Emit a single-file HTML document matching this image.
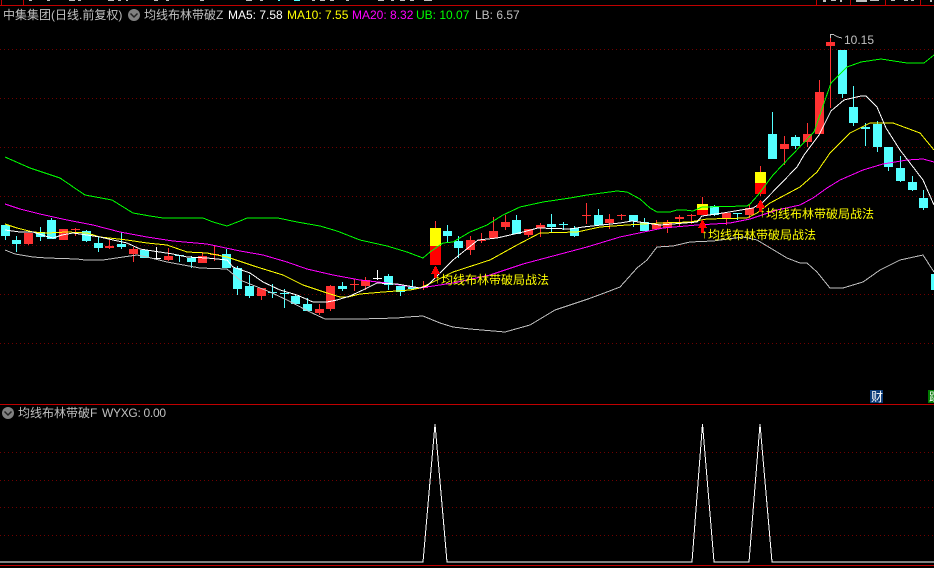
<!DOCTYPE html>
<html lang="zh"><head><meta charset="utf-8"><title>均线布林带破</title>
<style>
html,body{margin:0;padding:0;background:#000;width:934px;height:568px;overflow:hidden}
#w{position:relative;width:934px;height:568px;background:#000;overflow:hidden;font:12px/12px "Liberation Sans","WenQuanYi Zen Hei","Noto Sans CJK SC",sans-serif}
#w svg{position:absolute;left:0;top:0}
#w span{position:absolute;white-space:nowrap;color:#c0c0c0;line-height:12px}
#w span.a{color:#ffff00;font-family:"WenQuanYi Zen Hei","Noto Sans CJK SC",sans-serif;font-size:12px}
#w span.u{color:#ffff00;font-family:"Liberation Mono","DejaVu Sans Mono",monospace;font-size:12px}
</style></head><body><div id="w">
<svg width="934" height="568" viewBox="0 0 934 568" shape-rendering="crispEdges">
<path stroke="#700000" stroke-width="1" stroke-dasharray="1 3" fill="none" d="M0 49.5H934M0 98.5H934M0 147.5H934M0 196.5H934M0 245.5H934M0 294.5H934M0 343.5H934M0 452.5H934M0 480.5H934M0 507.5H934M0 535.5H934"/>
<path fill="#c00000" d="M0 5h934v1H0zM0 404h934v1H0zM0 565h934v1H0zM1 0h1v5H1zM23 0h1v5h-1zM816 0h1v5h-1zM850 0h1v5h-1zM885 0h1v5h-1zM920 0h1v5h-1z"/>
<path fill="#c0c0c0" d="M29 0h3v1h-3zM47 0h3v1h-3zM69 0h6v1h-6zM78 0h3v1h-3zM108 0h6v1h-6zM118 0h3v1h-3zM126 0h2v1h-2zM154 0h4v1h-4zM166 0h3v1h-3zM200 0h4v1h-4zM246 0h6v1h-6zM260 0h3v1h-3zM312 0h3v1h-3zM320 0h5v1h-5zM330 0h4v1h-4zM346 0h3v1h-3zM378 0h6v1h-6zM391 0h3v1h-3zM400 0h5v1h-5zM410 0h4v1h-4zM424 0h8v1h-8zM823 0h3v2h-3zM831 0h5v1h-5zM840 0h2v2h-2zM856 0h11v2h-11zM870 0h9v1h-9zM891 0h4v1h-4zM904 0h4v1h-4zM911 0h3v1h-3zM930 0h2v2h-2z"/>
<path fill="#54ffff" d="M278 0h2v1h-2zM294 0h6v1h-6z"/>

<path fill="#54ffff" d="
M5 225h1v15h-1zM1 225h9v11H1z
M16 236h1v16h-1zM12 240h9v4h-9z
M40 227h1v14h-1zM36 232h9v5h-9z
M51 218h1v21h-1zM47 220h9v19h-9z
M86 230h1v12h-1zM82 231h9v10h-9z
M98 237h1v15h-1zM94 243h9v5h-9z
M121 232h1v17h-1zM117 244h9v3h-9z
M144 249h1v9h-1zM140 250h9v8h-9z
M179 255h1v7h-1zM175 255h9v1h-9z
M191 256h1v12h-1zM187 258h9v4h-9z
M226 249h1v19h-1zM222 254h9v14h-9z
M237 266h1v29h-1zM233 268h9v21h-9z
M249 275h1v23h-1zM245 286h9v10h-9z
M272 284h1v14h-1zM268 292h9v1h-9z
M284 289h1v19h-1zM280 293h9v1h-9z
M295 294h1v11h-1zM291 296h9v8h-9z
M307 298h1v13h-1zM303 304h9v7h-9z
M342 282h1v9h-1zM338 286h9v3h-9z
M388 274h1v16h-1zM384 276h9v9h-9z
M400 286h1v10h-1zM396 286h9v6h-9z
M412 280h1v10h-1zM408 287h9v2h-9z
M447 225h1v17h-1zM443 231h9v5h-9z
M458 236h1v22h-1zM454 241h9v7h-9z
M516 215h1v19h-1zM512 220h9v14h-9z
M551 214h1v18h-1zM547 224h9v3h-9z
M563 222h1v8h-1zM559 224h9v1h-9z
M574 226h1v11h-1zM570 228h9v8h-9z
M598 209h1v16h-1zM594 215h9v10h-9z
M633 215h1v12h-1zM629 215h9v6h-9z
M644 218h1v13h-1zM640 222h9v9h-9z
M714 205h1v11h-1zM710 206h9v9h-9z
M737 213h1v7h-1zM733 213h9v1h-9z
M772 112h1v47h-1zM768 134h9v25h-9z
M795 135h1v14h-1zM791 137h9v9h-9z
M842 50h1v48h-1zM838 50h9v44h-9z
M853 86h1v40h-1zM849 107h9v16h-9z
M865 123h1v23h-1zM861 127h9v2h-9z
M877 121h1v31h-1zM873 124h9v23h-9z
M888 147h1v24h-1zM884 147h9v20h-9z
M900 156h1v26h-1zM896 168h9v13h-9z
M912 176h1v15h-1zM908 182h9v8h-9z
M923 190h1v20h-1zM919 198h9v10h-9z
M931 274h3v16h-3z"/>

<path fill="#ff3232" d="
M28 233h1v12h-1zM24 233h9v11h-9z
M63 229h1v11h-1zM59 229h9v11h-9z
M75 228h1v8h-1zM71 229h9v1h-9z
M109 240h1v9h-1zM105 246h9v2h-9z
M133 247h1v15h-1zM129 249h9v5h-9z
M168 248h1v13h-1zM164 256h9v4h-9z
M202 252h1v11h-1zM198 256h9v7h-9z
M214 246h1v15h-1zM210 254h9v1h-9z
M261 288h1v12h-1zM257 288h9v8h-9z
M319 304h1v11h-1zM315 309h9v4h-9z
M330 285h1v26h-1zM326 286h9v23h-9z
M354 279h1v12h-1zM350 284h9v1h-9z
M365 277h1v13h-1zM361 280h9v6h-9z
M423 281h1v9h-1zM419 287h9v1h-9z
M470 236h1v19h-1zM466 240h9v10h-9z
M481 233h1v10h-1zM477 240h9v1h-9z
M493 217h1v22h-1zM489 231h9v7h-9z
M505 215h1v15h-1zM501 222h9v5h-9z
M528 229h1v8h-1zM524 229h9v6h-9z
M540 223h1v14h-1zM536 225h9v3h-9z
M586 203h1v21h-1zM582 215h9v1h-9z
M609 214h1v15h-1zM605 219h9v4h-9z
M621 214h1v6h-1zM617 215h9v1h-9z
M656 220h1v10h-1zM652 224h9v5h-9z
M667 220h1v13h-1zM663 222h9v6h-9z
M679 215h1v12h-1zM675 217h9v2h-9z
M691 214h1v10h-1zM687 215h9v1h-9z
M726 213h1v12h-1zM722 213h9v5h-9z
M749 204h1v14h-1zM745 208h9v7h-9z
M784 136h1v29h-1zM780 144h9v5h-9z
M807 123h1v24h-1zM803 134h9v8h-9z
M819 80h1v54h-1zM815 92h9v42h-9z
M830 35h1v73h-1zM826 42h9v4h-9z
M435 221h1v7h-1zM702 197h1v7h-1zM760 166h1v6h-1zM760 194h1v2h-1z"/>

<path fill="#ffffff" d="M156 247h1v12h-1zM152 258h9v1h-9zM377 270h1v10h-1zM373 278h9v1h-9z"/>

<path fill="#ffff00" d="M430 228h11v18h-11zM697 204h11v6h-11zM755 172h11v11h-11z"/>
<path fill="#ff0000" d="M430 246h11v19h-11zM697 210h11v5h-11zM755 183h11v11h-11z"/>

<g fill="none" stroke-width="1">
<polyline stroke="#c0c0c0" points="5,250 15,254 33,257 47,258 77,259 85,260 103,260 123,257 137,255 147,257 167,262 200,268 227,269 240,280 270,292 287,300 310,312 325,319 360,319 397,318 407,317 423,316 440,323 453,327 470,329 505,332 530,325 555,310 588,299 607,292 620,287 637,268 647,260 657,247 673,246 690,242 713,241 743,237 757,240 787,258 800,263 807,263 817,272 830,288 843,288 863,282 880,270 900,260 923,255 934,272"/>
<polyline stroke="#00ff00" points="5,157 30,168 60,178 85,195 112,200 133,213 150,216 163,218 203,218 213,222 227,226 240,221 247,218 278,218 297,222 320,226 337,231 360,240 387,246 407,252 423,258 430,252 443,243 453,242 470,232 487,225 503,215 520,207 543,202 570,198 587,195 617,191 627,192 640,199 650,208 657,212 670,212 677,210 685,210 693,211 702,207 747,206 750,204 758,195 773,175 792,155 814,132 831,83 847,67 861,62 881,59 907,63 924,63 934,55"/>
<polyline stroke="#ff00ff" points="5,204 20,209 40,214 67,220 93,225 120,232 147,237 173,241 207,244 240,251 263,255 287,262 307,269 333,275 360,280 387,283 420,288 453,283 490,275 523,264 553,256 587,247 620,237 663,228 697,225 730,223 750,219 777,210 800,205 813,198 827,188 840,180 863,170 883,164 907,160 923,159 934,162"/>
<polyline stroke="#ffff00" points="5,224 17,228 33,232 47,233 67,232 87,233 100,237 127,240 147,243 167,245 187,252 207,253 227,257 257,267 283,275 303,285 327,293 340,297 348,297 360,294 383,292 410,290 420,288 433,282 453,272 490,260 517,245 540,233 577,232 600,227 627,225 660,223 690,222 707,219 747,218 757,213 770,203 800,187 817,172 830,153 850,133 870,123 893,123 920,133 934,150"/>
<polyline stroke="#ffffff" points="5,230 20,232 33,232 45,236 53,238 62,235 73,233 87,235 100,237 113,240 127,243 140,249 153,251 173,254 187,257 207,258 227,260 233,267 250,273 263,282 280,290 297,295 313,302 327,302 337,300 350,296 363,290 377,283 397,284 420,288 427,286 453,260 478,240 497,238 523,232 538,228 570,229 583,227 620,223 632,221 660,225 697,222 702,216 723,213 753,208 763,202 797,167 804,155 819,135 831,111 844,100 861,96 866,96 877,107 886,128 900,150 910,163 923,180 934,205"/>
<polyline stroke="#ffffff" points="0,562 423,562 435,424 447,562 692,562 702.5,424 714,562 749,562 760,424 772,562 934,562"/>
</g>

<path fill="#ff0000" d="M435 266h1v1h1v2h1v2h1v2h1v1h-3v4h-3v-4h-3v-1h1v-2h1v-2h1v-2h1zM702 220h1v1h1v2h1v2h1v2h1v1h-3v5h-3v-5h-3v-1h1v-2h1v-2h1v-2h1zM760 200h1v1h1v2h1v2h1v2h1v1h-3v4h-3v-4h-3v-1h1v-2h1v-2h1v-2h1z"/>

<path fill="none" stroke="#c0c0c0" d="M830.5 38V34.500H834M834 35l4 2 4 1"/>

<rect x="870" y="390" width="13" height="13" fill="#0a3a78"/>
<rect x="928" y="390" width="6" height="13" fill="#007a00"/>

<g shape-rendering="auto">
<circle cx="134" cy="15" r="6" fill="#808080"/>
<path d="M130.500 13.500l3.500 3.500 3.500-3.500" fill="none" stroke="#222" stroke-width="1.500"/>
<circle cx="8" cy="413" r="6" fill="#808080"/>
<path d="M4.500 411.500l3.500 3.500 3.500-3.500" fill="none" stroke="#222" stroke-width="1.500"/>
</g>
</svg>

<span style="left:3px;top:9px">中集集团(日线.前复权)</span>
<span style="left:144px;top:9px">均线布林带破Z</span>
<span style="left:228px;top:9px;color:#fff">MA5: 7.58</span>
<span style="left:287px;top:9px;color:#ff0">MA10: 7.55</span>
<span style="left:352px;top:9px;color:#f0f">MA20: 8.32</span>
<span style="left:416px;top:9px;color:#0f0">UB: 10.07</span>
<span style="left:475px;top:9px">LB: 6.57</span>

<span style="left:18px;top:407px">均线布林带破F</span>
<span style="left:102px;top:407px;letter-spacing:-.3px">WYXG: 0.00</span>

<span style="left:844px;top:34px">10.15</span>

<span class="u" style="left:434px;top:274px">↑</span><span class="a" style="left:441px;top:274px">均线布林带破局战法</span>
<span class="u" style="left:701px;top:229px">↑</span><span class="a" style="left:708px;top:229px">均线布林带破局战法</span>
<span class="u" style="left:759px;top:208px">↑</span><span class="a" style="left:766px;top:208px">均线布林带破局战法</span>

<span style="left:871px;top:391px;color:#fff">财</span>
<div style="position:absolute;left:928px;top:390px;width:6px;height:13px;overflow:hidden"><span style="left:1px;top:1px;color:#fff">跳</span></div>
</div></body></html>
